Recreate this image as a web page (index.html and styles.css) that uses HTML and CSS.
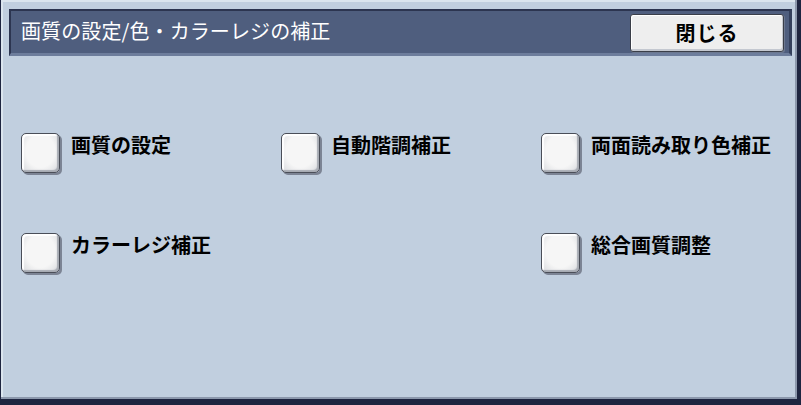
FILE: index.html
```html
<!DOCTYPE html>
<html lang="ja">
<head>
<meta charset="utf-8">
<title>画質の設定/色・カラーレジの補正</title>
<link rel="stylesheet" href="styles.css">
</head>
<body>
<div class="window">
  <div class="titlebar">
    <span class="title">画質の設定/色・カラーレジの補正</span>
    <button class="close">閉じる</button>
  </div>
  <div class="options">
    <div class="option"><span class="box"></span><span class="label">画質の設定</span></div>
    <div class="option"><span class="box"></span><span class="label">自動階調補正</span></div>
    <div class="option"><span class="box"></span><span class="label">両面読み取り色補正</span></div>
    <div class="option"><span class="box"></span><span class="label">カラーレジ補正</span></div>
    <div class="option empty"></div>
    <div class="option"><span class="box"></span><span class="label">総合画質調整</span></div>
  </div>
</div>
</body>
</html>
```
FILE: styles.css
```css
html, body {
  margin: 0;
  padding: 0;
  background: #1e2540;
}
body {
  font-family: "Noto Sans CJK JP", "Noto Sans", sans-serif;
}
.window {
  width: 801px;
  height: 405px;
  box-sizing: border-box;
  background: #c1cfdf;
  border-left: 1px solid #1e2540;
  border-right: 4px solid #1e2540;
  border-bottom: 6px solid #1e2540;
  box-shadow: inset -2px -2px 0 #8c98ac, inset 2px 2px 0 #dbe5ee;
  padding: 9px 5px 0 8px;
}
.titlebar {
  height: 47px;
  box-sizing: border-box;
  background: #4f5e7e;
  border-top: 2px solid #2c3550;
  border-left: 2px solid #2c3550;
  border-right: 3px solid #34405c;
  border-bottom: 3px solid #6d7d9c;
  display: flex;
  align-items: center;
  justify-content: space-between;
  padding: 0 5px 0 10px;
}
.title {
  color: #ffffff;
  font-size: 20px;
  line-height: 24px;
  margin-top: -2px;
  letter-spacing: 0.1px;
}
.close {
  width: 154px;
  height: 38px;
  box-sizing: border-box;
  margin-top: 1px;
  background: #eeeeee;
  border: 1px solid #3a3e48;
  border-radius: 3px;
  box-shadow: inset -1px -2px 0 #c4c8d0, inset 1px 1px 0 #ffffff, 1px 1px 0 #6c7890;
  font-family: "Noto Sans CJK JP", sans-serif;
  font-size: 20px;
  font-weight: 700;
  color: #000000;
  padding: 0;
  letter-spacing: 1px;
}
.options {
  margin-top: 77px;
  padding-left: 12px;
  display: grid;
  grid-template-columns: 260px 260px 260px;
  row-gap: 60px;
}
.option {
  display: flex;
  align-items: flex-start;
  gap: 11px;
  height: 40px;
}
.box {
  width: 39px;
  height: 40px;
  box-sizing: border-box;
  flex: none;
  border: 1px solid #4a4e58;
  border-radius: 5px;
  background: radial-gradient(ellipse at 50% 45%, #f6f6f6 55%, #d6d8dc 100%);
  box-shadow: 2px 2px 0 #7c8494, inset -2px -2px 1px #a8acb4, inset 2px 2px 1px #ffffff;
}
.label {
  font-size: 20px;
  font-weight: 700;
  line-height: 24px;
  color: #000000;
  white-space: nowrap;
}
```
